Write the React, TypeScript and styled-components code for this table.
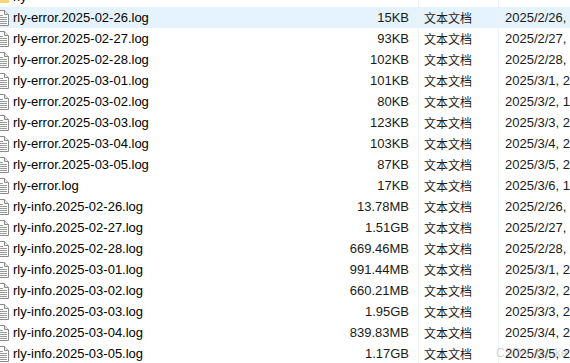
import styled, { createGlobalStyle } from "styled-components";

const GlobalStyle = createGlobalStyle`
  html, body {
    margin: 0;
    padding: 0;
    background: #ffffff;
    overflow: hidden;
  }
`;

const Page = styled.div`
  position: relative;
  width: 570px;
  height: 363px;
  overflow: hidden;
  font-family: "Liberation Sans", "Noto Sans CJK SC", sans-serif;
  font-size: 13px;
  color: #1a1a1a;
`;

const List = styled.div`
  margin-top: -14px;
  margin-left: -6px;
  display: flex;
  flex-direction: column;
`;

const Row = styled.div<{ $selected?: boolean }>`
  display: grid;
  grid-template-columns: 19px 300px 105px 80px 1fr;
  height: 21px;
  align-items: stretch;
  background: ${(p) => (p.$selected ? "#e5f3ff" : "transparent")};
`;

const IconCell = styled.div`
  display: flex;
  align-items: center;
`;

const Name = styled.div`
  display: flex;
  align-items: center;
  white-space: nowrap;
  color: #000;
`;

const Size = styled.div`
  display: flex;
  align-items: center;
  justify-content: flex-end;
  padding-right: 9px;
  color: #1a1a1a;
`;

const Cell = styled.div`
  display: flex;
  align-items: center;
  padding-left: 6px;
  border-left: 1px solid #eef3f8;
  white-space: nowrap;
  overflow: hidden;
`;

const TypeText = styled.span`
  font-family: "Noto Sans CJK SC", sans-serif;
  font-size: 12px;
  margin-left: -1px;
`;

const Watermark = styled.div`
  position: absolute;
  left: 496px;
  top: 346px;
  font-size: 12px;
  color: rgba(120, 120, 120, 0.35);
  white-space: nowrap;
`;

const DocIcon = () => (
  <svg width="16" height="16" viewBox="0 0 16 16">
    <path d="M2.5 0.5 H10.5 L14.5 4.5 V15.5 H2.5 Z" fill="#fff" stroke="#8a8a8a" />
    <path d="M10.5 0.5 V4.5 H14.5" fill="#e8e8e8" stroke="#8a8a8a" />
    <g stroke="#9a9a9a">
      <line x1="4" y1="5.5" x2="9" y2="5.5" />
      <line x1="4" y1="7.5" x2="13" y2="7.5" />
      <line x1="4" y1="9.5" x2="13" y2="9.5" />
      <line x1="4" y1="11.5" x2="13" y2="11.5" />
      <line x1="4" y1="13.5" x2="13" y2="13.5" />
    </g>
  </svg>
);

const FolderIcon = () => (
  <svg width="16" height="16" viewBox="0 0 16 16">
    <path d="M1 3 H6 L7.5 4.5 H15 V14 H1 Z" fill="#f3c04a" />
    <rect x="1" y="6" width="14" height="8" fill="#f8d775" />
  </svg>
);

type FileRow = { name: string; size: string; date: string };

const files: FileRow[] = [
  { name: "rly-error.2025-02-26.log", size: "15KB", date: "2025/2/26, 23:59" },
  { name: "rly-error.2025-02-27.log", size: "93KB", date: "2025/2/27, 23:59" },
  { name: "rly-error.2025-02-28.log", size: "102KB", date: "2025/2/28, 23:59" },
  { name: "rly-error.2025-03-01.log", size: "101KB", date: "2025/3/1, 23:59" },
  { name: "rly-error.2025-03-02.log", size: "80KB", date: "2025/3/2, 18:20" },
  { name: "rly-error.2025-03-03.log", size: "123KB", date: "2025/3/3, 23:59" },
  { name: "rly-error.2025-03-04.log", size: "103KB", date: "2025/3/4, 23:59" },
  { name: "rly-error.2025-03-05.log", size: "87KB", date: "2025/3/5, 23:59" },
  { name: "rly-error.log", size: "17KB", date: "2025/3/6, 10:12" },
  { name: "rly-info.2025-02-26.log", size: "13.78MB", date: "2025/2/26, 23:59" },
  { name: "rly-info.2025-02-27.log", size: "1.51GB", date: "2025/2/27, 23:59" },
  { name: "rly-info.2025-02-28.log", size: "669.46MB", date: "2025/2/28, 23:59" },
  { name: "rly-info.2025-03-01.log", size: "991.44MB", date: "2025/3/1, 23:59" },
  { name: "rly-info.2025-03-02.log", size: "660.21MB", date: "2025/3/2, 23:59" },
  { name: "rly-info.2025-03-03.log", size: "1.95GB", date: "2025/3/3, 23:59" },
  { name: "rly-info.2025-03-04.log", size: "839.83MB", date: "2025/3/4, 23:59" },
  { name: "rly-info.2025-03-05.log", size: "1.17GB", date: "2025/3/5, 23:59" },
];

export default function App() {
  return (
    <Page>
      <GlobalStyle />
      <List>
        <Row>
          <IconCell>
            <FolderIcon />
          </IconCell>
          <Name>rly</Name>
          <Size />
          <Cell />
          <Cell />
        </Row>
        {files.map((f, i) => (
          <Row key={f.name} $selected={i === 0}>
            <IconCell>
              <DocIcon />
            </IconCell>
            <Name>{f.name}</Name>
            <Size>{f.size}</Size>
            <Cell>
              <TypeText>文本文档</TypeText>
            </Cell>
            <Cell>{f.date}</Cell>
          </Row>
        ))}
      </List>
      <Watermark>CSDN @jake</Watermark>
    </Page>
  );
}
